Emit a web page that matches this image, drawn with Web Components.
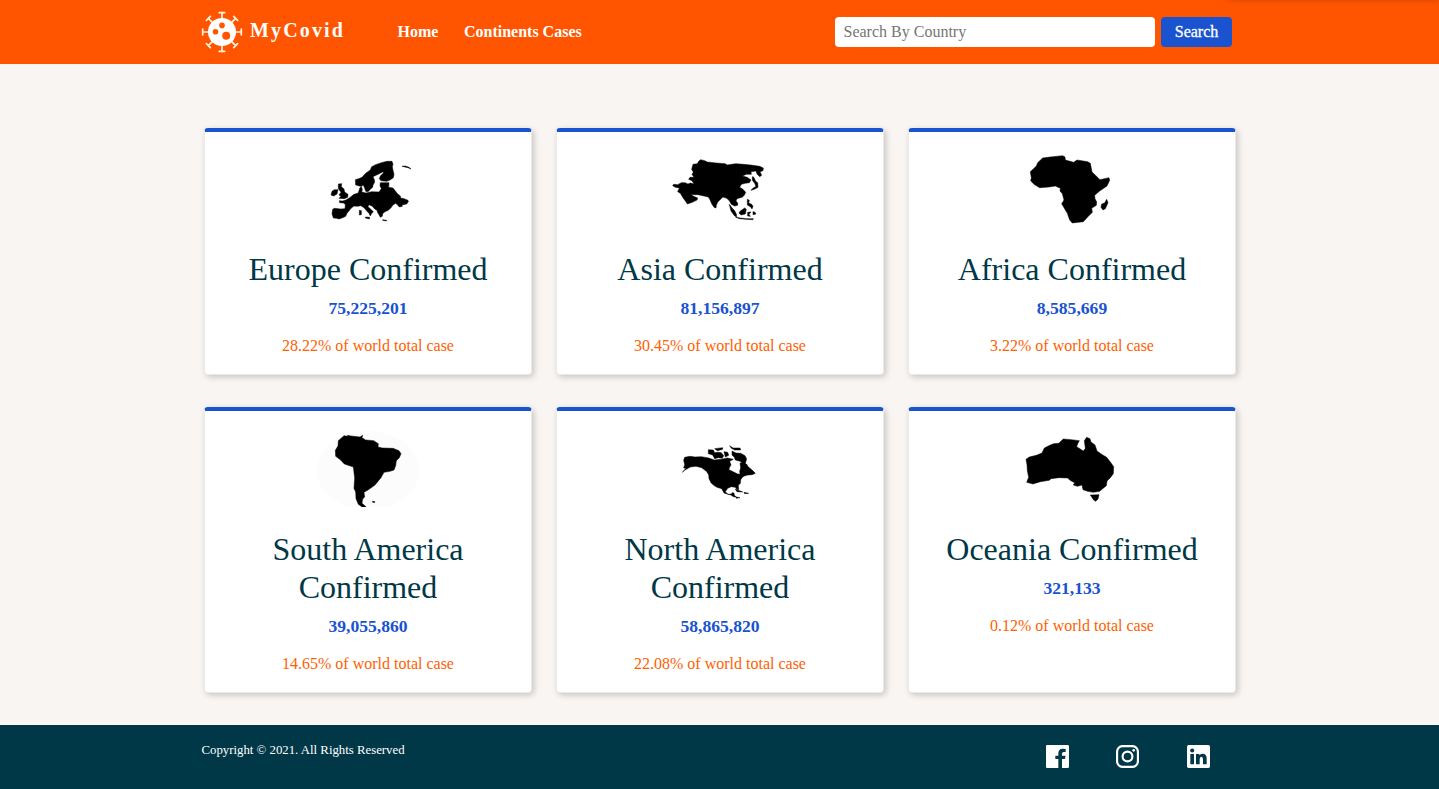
<!DOCTYPE html>
<html lang="en">
<head>
<meta charset="utf-8">
<title>MyCovid</title>
<style>
html,body{margin:0;height:100%}
body{font-family:"Liberation Serif","Times New Roman",serif;font-size:16px;background:#f8f5f2;color:#003847;overflow:hidden}
</style>
</head>
<body>
<covid-app></covid-app>
<script>
const define = (name, html) => customElements.define(name, class extends HTMLElement {
  constructor() {
    super();
    const t = document.createElement('template');
    t.innerHTML = html;
    this.attachShadow({mode: 'open'}).appendChild(t.content.cloneNode(true));
  }
});

define('covid-logo', `<style>
:host{display:flex;align-items:center;color:#fff}
svg{display:block;width:42px;height:42px;margin-right:7px}
b{font-size:20px;letter-spacing:2.15px;line-height:24px;margin-top:-5px}
</style>
<svg viewBox="-21 -21 42 42"><g fill="none" stroke="#fff3dd" stroke-width="1.7" stroke-linecap="round">
<path d="M0-13V-19M-2.8-19.3H2.8M0 13V19M-2.8 19.3H2.8M-13 0H-19M-19.3-2.8V2.8M13 0H19M19.3-2.8V2.8"/>
<path transform="rotate(45)" d="M0-13V-19M-2.8-19.3H2.8M0 13V19M-2.8 19.3H2.8M-13 0H-19M-19.3-2.8V2.8M13 0H19M19.3-2.8V2.8"/></g>
<circle r="14" fill="#fff"/><g fill="#ff5500"><circle cx="0" cy="-6.6" r="2.8"/><circle cx="-6.5" cy="-.2" r="2.8"/><circle cx="4.2" cy="3.8" r="4"/></g></svg><b><slot></slot></b>`);

define('nav-link', `<style>:host{display:block;color:#fff;font-weight:bold;line-height:20px}</style><slot></slot>`);

define('country-search', `<style>
:host{display:flex;gap:6px}
input{box-sizing:border-box;width:320px;height:30px;border:0;border-radius:4px;background:#fff;padding:0 8.5px;font:16px "Liberation Serif","Times New Roman",serif;outline:0}
input::placeholder{color:#757575;opacity:1}
button{width:71px;height:30px;border:0;border-radius:4px;background:#1a53cf;color:#fff;padding:0;font:16px "Liberation Serif","Times New Roman",serif;-webkit-text-stroke:.3px #fff}
</style><input placeholder="Search By Country"><button>Search</button>`);

define('site-header', `<style>
:host{display:block;height:64px;background:#ff5500;overflow:hidden;position:relative}
div{width:1031px;height:64px;margin-left:201px;display:flex;align-items:center}
nav{display:flex;gap:25.5px;margin-left:52.5px}
country-search{margin-left:auto}
i{position:absolute;right:0;top:-20px;width:212px;height:18px;box-shadow:0 0 7px rgba(60,20,0,.45)}
</style><div><covid-logo>MyCovid</covid-logo><nav><nav-link>Home</nav-link><nav-link>Continents Cases</nav-link></nav><country-search></country-search></div><i></i>`);

define('continent-card', `<style>
:host{display:block;box-sizing:border-box;background:#fff;border:1px solid #eceae8;border-top:4px solid #1a53cf;border-radius:4px;box-shadow:2px 2px 6px rgba(0,0,0,.2);padding:12px 24px 0;text-align:center}
::slotted(svg){display:block;width:120px;height:84px;margin:0 auto 22.3px}
h2{font-size:32px;line-height:38.4px;font-weight:400;margin:0 0 8.6px;color:#003847}
b{display:block;font-size:17.6px;line-height:22px;color:#1a53cf}
p{font-size:16px;line-height:20px;margin:16.9px 0 0;color:#ff6000}
</style><slot name="map"></slot><h2><slot name="title"></slot></h2><b><slot name="count"></slot></b><p><slot name="share"></slot></p>`);

define('site-footer', `<style>
:host{display:block;height:64px;background:#003847;color:#fff}
div{width:1008.300px;margin-left:201.500px;display:flex;justify-content:space-between}
span{font-size:12.8px;line-height:16px;margin-top:17px}
nav{display:flex;gap:47.5px;margin-top:20px}
svg{display:block;width:23px;height:23px}
</style><div><span>Copyright © 2021. All Rights Reserved</span><nav>
<svg viewBox="0 0 69 69"><path fill="#fff" d="M3 0H65Q69 0 69 4V65Q69 69 65 69H48V42H57L58.500 32H48V26Q48 21 53 21H59V12Q56 11 50 11Q37 11 37 25V32H28V42H37V69H3Q0 69 0 65V4Q0 0 3 0Z"/></svg>
<svg viewBox="0 0 69 69" fill="none" stroke="#fff" stroke-width="6.500"><rect x="3.200" y="3.200" width="62.600" height="62.600" rx="17"/><circle cx="34.500" cy="34.500" r="14.700"/><circle cx="53" cy="16" r="4" fill="#fff" stroke="none"/></svg>
<svg viewBox="0 0 69 69"><rect width="69" height="69" rx="5" fill="#fff"/><g fill="#003847"><circle cx="15.500" cy="16.500" r="6"/><path d="M10 27H21V58H10ZM27 27H37V31Q40 26 47 26Q59 26 59 41V58H48V43Q48 35 43 35Q38 35 38 43V58H27Z"/></g></svg>
</nav></div>`);

const continents = [
['Europe Confirmed','75,225,201','28.22',12,6,`M216 34L219 43 217 50 219 61 222 73 220 83 210 90 200 94 183 92 178 86 181 78 191 68 188 66 178 71 168 76 159 80 163 89 164 97 159 105 158 112 151 118 144 125 137 124 134 114 130 106 121 109 107 105 106 89 116 86 126 82 137 70 151 60 155 50 167 44 184 38 201 34Z
M181 98H207L206 112 219 114 226 123 233 132 241 138 242 144 252 146 264 151 265 155 260 162 246 165 247 169 238 171 233 165 227 160 219 165 213 173 205 181 195 185 188 191 187 199 181 202 177 194 173 188 171 181 164 177 157 169 147 164 144 170 155 180 160 186 155 190 151 198 147 190 141 184 132 173 123 167 112 169 102 168 94 174 86 184 81 190 77 199 66 204 57 207 50 205 40 204 36 191 38 178 43 175 62 177 75 176 76 164 71 159 59 158 58 152 68 153 78 150 89 143 102 133 115 129 119 115 124 109 127 119 125 126 138 129 155 125 177 126 184 116 180 107Z
M55 102L65 101 64 110 72 117 74 126 84 133 83 142 73 146 57 145 63 139 57 135 63 127 55 116ZM43 119L54 119 51 132 41 138 33 135 36 124ZM118 181L124 182 124 194 118 195ZM137 201L149 202 148 207 136 204ZM188 209L200 211 199 213 188 211ZM246 49L256 48 267 52 273 57 264 53Z`],
['Asia Confirmed','81,156,897','30.45',5,6,`M84 43L97 41 101 34 107 29 119 32 127 36 154 39 181 41 186 45 212 41 235 43 257 45 284 49 295 54 294 62 285 65 290 76 284 80 276 72 273 63 258 65 259 73 244 73 232 78 247 82 258 90 253 98 240 100 229 103 224 112 234 118 242 127 238 136 231 142 216 146 213 153 218 159 218 166 209 168 199 163 192 151 185 145 174 141 165 149 158 157 154 166 153 174 147 172 140 161 135 149 130 141 113 137 99 134 88 134 77 133 86 139 98 144 96 150 82 157 67 162 61 153 54 143 46 130 38 125 43 114 31 112 23 107 26 103 38 104 49 98 60 98 69 102 76 99 87 102 81 92 71 88 75 82 87 82 81 73 85 67 80 58Z
M77 113L90 113 91 124 83 125ZM262 80L266 81 272 94 278 98 279 112 268 118 258 121 262 116 273 109 269 100 262 91ZM247 148L253 151 251 159 260 163 264 169 261 177 257 171 247 165ZM225 184L239 174 244 178 241 192 228 195 222 189ZM193 163L202 175 208 181 214 192 215 201 209 198 198 183ZM212 202L226 204 243 206 265 206 264 209 243 208 224 206ZM248 187L258 186 252 193 256 199 248 198ZM264 185L269 186 273 192 264 194Z`],
['Africa Confirmed','8,585,669','3.22',8,1,`M68 39L91 36 128 32 135 36 136 45 161 52 171 45 203 50 211 55 216 81 234 98 240 104 267 98 269 106 261 123 239 138 224 151 225 161 230 171 229 181 215 190 217 202 205 214 190 230 157 234 149 225 142 205 132 188 125 176 132 165 127 146 120 138 121 130 106 123 87 126 59 128 42 118 32 107 34 98 31 80 43 69 49 63 53 53Z
M260 163L264 173 256 191 249 195 243 187 245 177 254 174Z`],
['South America Confirmed','39,055,860','14.65',2,2,`M85 47L102 32 113 34 113 31 123 33 150 36 158 31 156 38 167 45 191 47 205 56 204 66 217 69 249 70 267 77 273 86 268 98 259 107 257 122 252 135 240 139 222 142 213 158 195 180 174 195 162 202 164 216 158 222 156 235 168 245 158 247 145 238 138 221 137 201 132 190 134 159 130 126 103 117 91 104 77 94 76 76 84 63Z
M188 229L195 230 193 233 187 231Z`],
['North America Confirmed','58,865,820','22.08',10,12,`M44 67L60 64 75 66 94 65 116 69 133 75 154 73 172 69 190 73 179 79 183 90 178 98 177 104 191 111 203 117 210 118 209 109 212 98 210 85 220 82 229 90 239 99 247 106 256 115 246 119 234 120 225 122 218 126 212 134 211 145 205 151 206 164 200 163 196 157 184 155 173 160 166 170 174 178 184 177 187 173 192 174 193 181 199 186 190 185 183 180 171 177 162 174 155 161 141 157 131 151 123 143 117 131 116 119 109 109 95 98 78 94 61 96 45 105 37 112 48 100 41 99 44 89 41 76Z
M115 44L130 45 134 53 143 52 154 53 161 62 157 70 145 68 134 71 128 60 115 56ZM134 41L158 38 158 43 142 47ZM162 50L173 52 176 61 166 66ZM179 32L189 39 210 39 212 45 194 45 184 40ZM186 48L198 54 212 55 225 62 230 72 226 85 233 91 221 89 210 79 196 75 193 67 186 60ZM196 163L211 168 218 171 201 170ZM222 172L236 175 224 176ZM198 186L210 188 199 190Z`],
['Oceania Confirmed','321,133','0.12',3,2,`M88 69L106 60 116 56 131 55 145 42 169 44 193 47 188 56 185 65 205 78 211 70 208 47 215 37 225 41 228 51 240 60 246 78 262 89 275 97 286 111 296 125 295 146 286 158 276 168 274 182 263 191 254 199 235 202 218 199 204 194 201 180 187 184 175 180 179 173 165 166 158 159 132 158 108 161 103 166 76 170 54 177 35 172 41 157 37 137 36 119 33 103 43 96 64 91 81 84Z
M226 210L252 209 249 222 242 229 236 225Z`]
];

customElements.define('covid-app', class extends HTMLElement {
  constructor() {
    super();
    const cards = continents.map(([name, count, pct, x, y, d], i) => `<continent-card>
<svg slot="map" viewBox="0 0 120 84">${i === 3 ? '<ellipse cx="60" cy="47.5" rx="51" ry="39.5" fill="#fcfcfc"/>' : ''}<g transform="translate(${x} ${y}) scale(.33333)"><path d="${d}" fill="#000" stroke="#000" stroke-width="1.5" stroke-linejoin="round"/></g></svg>
<span slot="title">${name}</span><span slot="count">${count}</span><span slot="share">${pct}% of world total case</span></continent-card>`).join('');
    this.attachShadow({mode: 'open'}).innerHTML = `<style>
:host{display:flex;flex-direction:column;height:789px}
main{flex:1;box-sizing:border-box;padding:64px 0 0 204px;display:grid;grid-template-columns:repeat(3,328px);grid-template-rows:247.4px 285.6px;gap:32px 24px}
</style><site-header></site-header><main>${cards}</main><site-footer></site-footer>`;
  }
});
</script>
</body>
</html>
